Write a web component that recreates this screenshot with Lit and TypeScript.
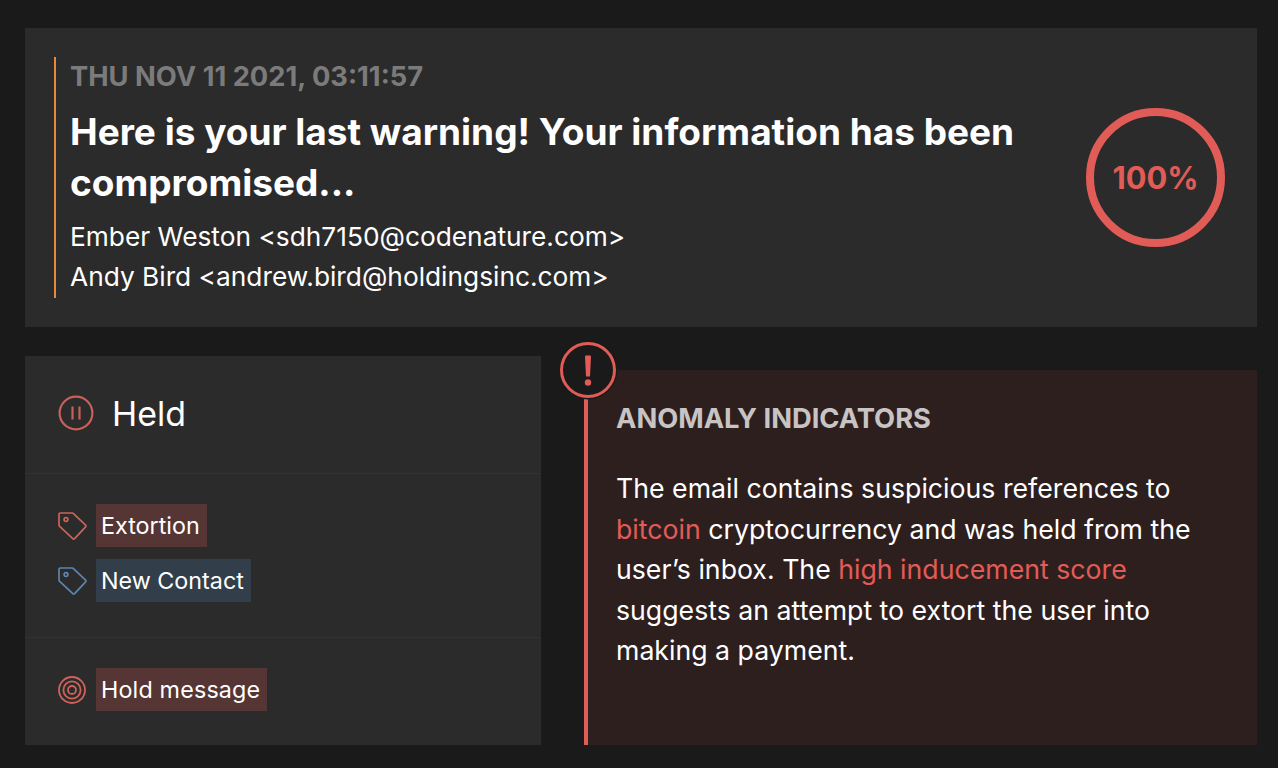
import { LitElement, html, css, svg } from "lit";
import { customElement } from "lit/decorators.js";

const tag = (c: string) => svg`<svg class="ic" width="29" height="28" viewBox="0 0 29 28" fill="none" stroke=${c} stroke-width="1.7" stroke-linejoin="round"><path d="M1 2.2 a1.2 1.2 0 0 1 1.2 -1.2 H14.2 a1.5 1.5 0 0 1 1 .4 L27.6 13.2 a1.2 1.2 0 0 1 0 1.7 L16.6 26.6 a1.3 1.3 0 0 1 -1.8 0 L1.4 14.2 a1.2 1.2 0 0 1 -.4 -1 Z"/><circle cx="8" cy="7.6" r="1.9"/></svg>`;

@customElement("app-root")
export class AppRoot extends LitElement {
  static styles = css`
    :host { display: block; width: 1278px; height: 768px; background: #1a1a1a; font-family: Inter, "Open Sans", sans-serif; color: #fff; overflow: hidden; }
    .page { padding: 28px 21px 23px 25px; display: flex; flex-direction: column; gap: 29px; }
    .top { height: 299px; box-sizing: border-box; background: #2b2b2b; padding: 29px 32px 29px 29px; display: flex; align-items: center; justify-content: space-between; }
    .head { height: 241px; box-sizing: border-box; border-left: 2px solid #e58a3a; padding: 1px 0 0 14px; width: 980px; }
    .date { font-size: 27.3px; line-height: 38px; font-weight: 700; color: #7b7b7b; }
    h1 { margin: 10px 0 0; font-size: 37px; line-height: 51px; font-weight: 700; }
    .addr { font-size: 26.3px; line-height: 40px; }
    .addrs { margin-top: 9px; }
    .score { width: 139px; height: 139px; box-sizing: border-box; border: 8px solid #e25c57; border-radius: 50%; color: #e25c57; font-size: 30.8px; font-weight: 700; display: flex; align-items: center; justify-content: center; margin-bottom: 1px; }
    .bottom { display: flex; height: 389px; }
    .left { width: 516px; background: #2b2b2b; display: flex; flex-direction: column; }
    .sec { border-bottom: 1px solid #323232; box-sizing: border-box; padding-left: 33px; }
    .sec:last-child { border-bottom: 0; }
    .status { height: 118px; padding-bottom: 4px; display: flex; align-items: center; gap: 18px; font-size: 33.9px; }
    .status span { margin-top: 2px; }
    .tags { height: 164px; padding-top: 30px; display: flex; flex-direction: column; gap: 12px; }
    .action { padding-top: 30px; }
    .row { display: flex; align-items: center; gap: 9px; height: 43px; }
    .ic { flex: none; }
    .chip { height: 43px; line-height: 43px; padding: 0 7px 0 5px; font-size: 23.3px; }
    .wide { letter-spacing: .17px; }
    .red { background: #553634; }
    .blue { background: #323e49; }
    .alert { position: relative; margin: 14px 0 0 43px; width: 673px; height: 375px; box-sizing: border-box; background: #2e1f1f; border-left: 4px solid #e25c57; padding: 29px 40px 0 28px; }
    .badge { position: absolute; left: -28px; top: -28px; width: 56px; height: 56px; background: #1a1a1a; border-radius: 50%; box-shadow: 0 0 0 1.5px #1a1a1a; }
    .badge svg { display: block; }
    h2 { margin: 0; font-size: 27.3px; line-height: 40px; font-weight: 700; color: #c8c4c4; }
    p { margin: 29px 0 0; font-size: 26.7px; line-height: 40.5px; }
    em { font-style: normal; color: #e25c57; }
  `;
  render() {
    return html`<div class="page">
      <section class="top">
        <div class="head">
          <div class="date">THU NOV 11 2021, 03:11:57</div>
          <h1>Here is your last warning! Your information has been compromised...</h1>
          <div class="addrs">
            <div class="addr">Ember Weston &lt;sdh7150@codenature.com&gt;</div>
            <div class="addr">Andy Bird &lt;andrew.bird@holdingsinc.com&gt;</div>
          </div>
        </div>
        <div class="score">100%</div>
      </section>
      <section class="bottom">
        <div class="left">
          <div class="sec status">
            <svg width="36" height="36" viewBox="0 0 36 36" fill="none" stroke="#c9605a" stroke-width="2.2"><circle cx="18" cy="18" r="16.4"/><path d="M14.5 11.5v13M21.5 11.5v13"/></svg>
            <span>Held</span>
          </div>
          <div class="sec tags">
            <div class="row">${tag("#cf6259")}<span class="chip red">Extortion</span></div>
            <div class="row">${tag("#5f84ad")}<span class="chip blue">New Contact</span></div>
          </div>
          <div class="sec action">
            <div class="row">
              <svg class="ic" width="29" height="28" viewBox="0 0 29 28" fill="none" stroke="#cf6259" stroke-width="1.8"><circle cx="14" cy="14" r="13"/><circle cx="14" cy="14" r="8.6"/><circle cx="14" cy="14" r="4"/></svg>
              <span class="chip red wide">Hold message</span>
            </div>
          </div>
        </div>
        <div class="alert">
          <div class="badge">
            <svg width="56" height="56" viewBox="0 0 56 56" fill="none"><circle cx="28" cy="28" r="26.5" stroke="#e25c57" stroke-width="3"/><path d="M25 14.5a1 1 0 0 1 1-1h4a1 1 0 0 1 1 1l-1 20h-4z" fill="#e25c57"/><circle cx="28" cy="40.5" r="3.2" fill="#e25c57"/></svg>
          </div>
          <h2>ANOMALY INDICATORS</h2>
          <p>The email contains suspicious references to <em>bitcoin</em> cryptocurrency and was held from the user’s inbox. The <em>high inducement score</em> suggests an attempt to extort the user into making a payment.</p>
        </div>
      </section>
    </div>`;
  }
}
